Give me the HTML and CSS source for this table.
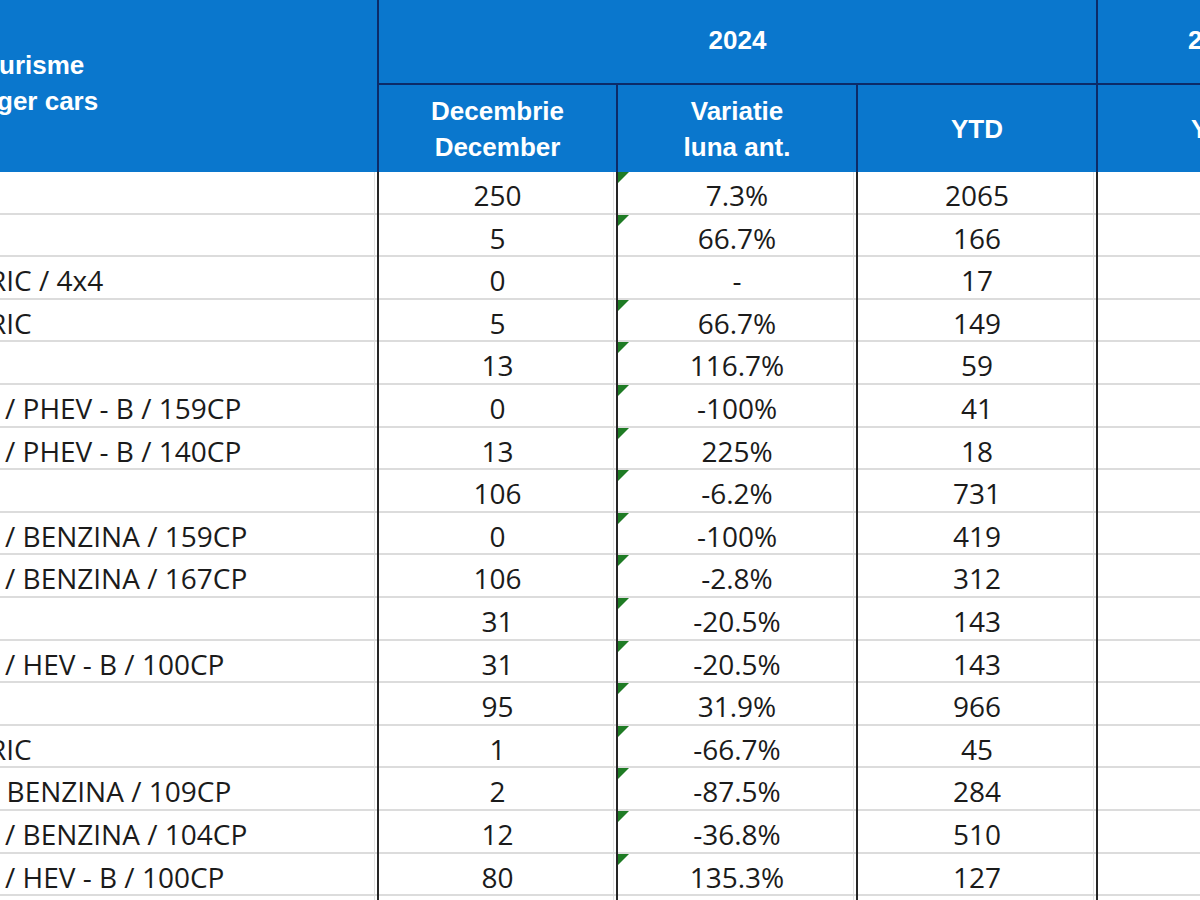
FILE: index.html
```html
<!DOCTYPE html>
<html lang="ro">
<head>
<meta charset="utf-8">
<title>Autoturisme - Passenger cars</title>
<link rel="stylesheet" href="styles.css">
</head>
<body>
<div class="sheet">
  <div class="thead">
    <div class="h-title"><span class="l1">urisme</span><span class="l2">ger cars</span></div>
    <div class="h-year">2024</div>
    <div class="h-year h-next">2023</div>
    <div class="h-sub">Decembrie<br>December</div>
    <div class="h-sub">Variatie<br>luna ant.</div>
    <div class="h-sub">YTD</div>
    <div class="h-sub">YTD</div>
  </div>
  <div class="tbody">
    <div class="row"><div class="c name"></div><div class="c num">250</div><div class="c num flag">7.3%</div><div class="c num">2065</div><div class="c"></div></div>
    <div class="row"><div class="c name"></div><div class="c num">5</div><div class="c num flag">66.7%</div><div class="c num">166</div><div class="c"></div></div>
    <div class="row"><div class="c name shift">RIC / 4x4</div><div class="c num">0</div><div class="c num">-</div><div class="c num">17</div><div class="c"></div></div>
    <div class="row"><div class="c name shift">RIC</div><div class="c num">5</div><div class="c num flag">66.7%</div><div class="c num">149</div><div class="c"></div></div>
    <div class="row"><div class="c name"></div><div class="c num">13</div><div class="c num flag">116.7%</div><div class="c num">59</div><div class="c"></div></div>
    <div class="row"><div class="c name">/ PHEV - B / 159CP</div><div class="c num">0</div><div class="c num flag">-100%</div><div class="c num">41</div><div class="c"></div></div>
    <div class="row"><div class="c name">/ PHEV - B / 140CP</div><div class="c num">13</div><div class="c num flag">225%</div><div class="c num">18</div><div class="c"></div></div>
    <div class="row"><div class="c name"></div><div class="c num">106</div><div class="c num flag">-6.2%</div><div class="c num">731</div><div class="c"></div></div>
    <div class="row"><div class="c name">/ BENZINA / 159CP</div><div class="c num">0</div><div class="c num flag">-100%</div><div class="c num">419</div><div class="c"></div></div>
    <div class="row"><div class="c name">/ BENZINA / 167CP</div><div class="c num">106</div><div class="c num flag">-2.8%</div><div class="c num">312</div><div class="c"></div></div>
    <div class="row"><div class="c name"></div><div class="c num">31</div><div class="c num flag">-20.5%</div><div class="c num">143</div><div class="c"></div></div>
    <div class="row"><div class="c name">/ HEV - B / 100CP</div><div class="c num">31</div><div class="c num flag">-20.5%</div><div class="c num">143</div><div class="c"></div></div>
    <div class="row"><div class="c name"></div><div class="c num">95</div><div class="c num flag">31.9%</div><div class="c num">966</div><div class="c"></div></div>
    <div class="row"><div class="c name shift">RIC</div><div class="c num">1</div><div class="c num flag">-66.7%</div><div class="c num">45</div><div class="c"></div></div>
    <div class="row"><div class="c name shift">/ BENZINA / 109CP</div><div class="c num">2</div><div class="c num flag">-87.5%</div><div class="c num">284</div><div class="c"></div></div>
    <div class="row"><div class="c name">/ BENZINA / 104CP</div><div class="c num">12</div><div class="c num flag">-36.8%</div><div class="c num">510</div><div class="c"></div></div>
    <div class="row"><div class="c name">/ HEV - B / 100CP</div><div class="c num">80</div><div class="c num flag">135.3%</div><div class="c num">127</div><div class="c"></div></div>
    <div class="row"><div class="c name"></div><div class="c num"></div><div class="c num"></div><div class="c num"></div><div class="c"></div></div>
  </div>
</div>
</body>
</html>
```
FILE: styles.css
```css
html, body {
  margin: 0;
  padding: 0;
  background: #ffffff;
  overflow: hidden;
}

.sheet {
  width: 1338px;
}

.thead {
  display: grid;
  grid-template-columns: 379px 239px 240px 240px 240px;
  grid-template-rows: 85px 87px;
  background: #0a77cd;
  color: #ffffff;
  font-family: "Liberation Sans", Arial, sans-serif;
  font-weight: bold;
  font-size: 26px;
  line-height: 36px;
}

.thead > div {
  box-sizing: border-box;
}

.h-title {
  grid-column: 1;
  grid-row: 1 / 3;
  border-right: 2px solid #0c2b68;
  display: flex;
  flex-direction: column;
  justify-content: center;
  padding-bottom: 6px;
  overflow: hidden;
  white-space: nowrap;
}

.h-title .l1 {
  display: block;
  margin-left: -1px;
}

.h-title .l2 {
  display: block;
  margin-left: -3px;
}

.h-year {
  grid-column: 2 / 5;
  grid-row: 1;
  border-right: 2px solid #0c2b68;
  border-bottom: 2px solid #0c2b68;
  display: flex;
  align-items: center;
  justify-content: center;
  padding-bottom: 4px;
}

.h-year.h-next {
  grid-column: 5;
}

.h-sub {
  grid-row: 2;
  border-right: 2px solid #0c2b68;
  display: flex;
  align-items: center;
  justify-content: center;
  text-align: center;
}

.row {
  display: grid;
  grid-template-columns: 379px 239px 240px 240px 240px;
  height: 42.6px;
}

.c {
  box-sizing: border-box;
  height: 42.6px;
  border-right: 2px solid #262626;
  box-shadow: inset 0 -2px 0 #dcdcdc, inset -2px 0 0 #ffffff, inset -3px 0 0 #e2e2e2;
  font-family: "Open Sans", "DejaVu Sans", sans-serif;
  font-size: 28px;
  line-height: 38px;
  padding-top: 4px;
  color: #1b1b1b;
  white-space: nowrap;
}

.num {
  text-align: center;
}

.name {
  overflow: hidden;
  padding-left: 5px;
}

.name.shift {
  text-indent: -16px;
}

.flag {
  position: relative;
}

.flag::before {
  content: "";
  position: absolute;
  left: 0;
  top: 0;
  width: 0;
  height: 0;
  border-top: 11px solid #1e7b24;
  border-right: 11px solid transparent;
}
```
